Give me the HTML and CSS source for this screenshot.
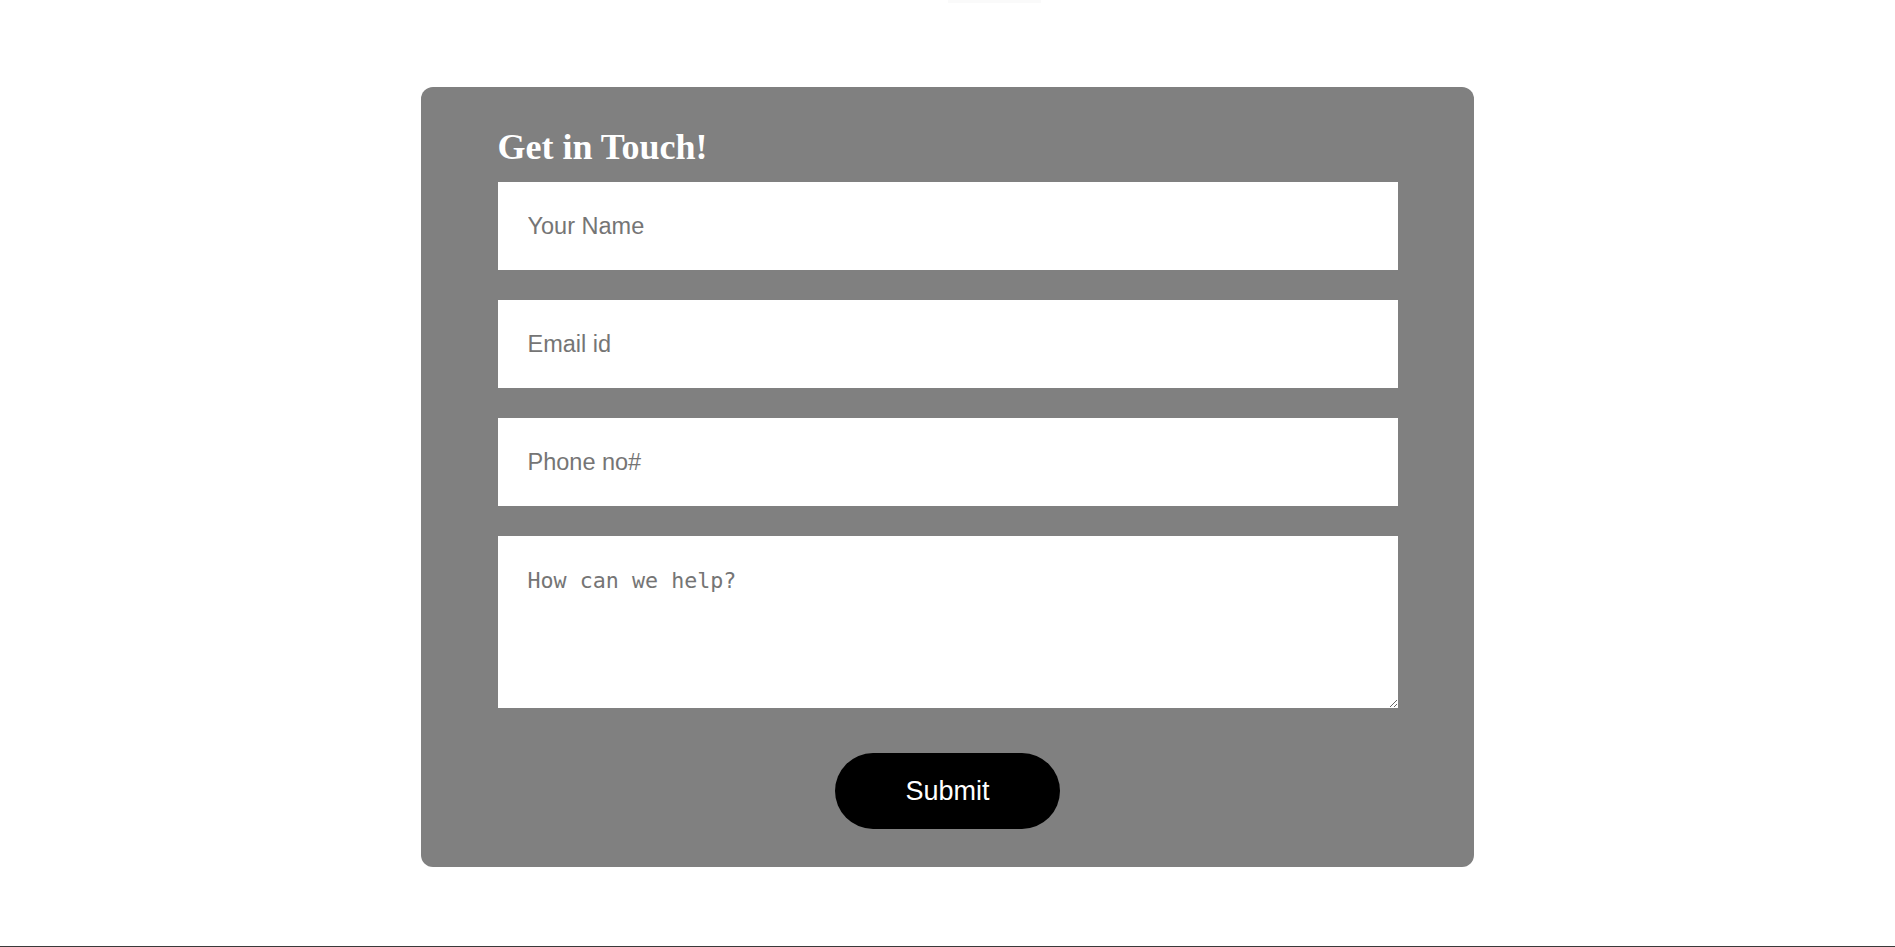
FILE: index.html
```html
<!DOCTYPE html>
<html lang="en">
<head>
<meta charset="utf-8">
<title>Get in Touch</title>
<link rel="stylesheet" href="styles.css">
</head>
<body>
<div class="top-ghost"></div>
<main class="page">
  <section class="card">
    <form class="contact-form">
      <h2 class="title">Get in Touch!</h2>
      <input class="field" type="text" placeholder="Your Name">
      <input class="field" type="email" placeholder="Email id">
      <input class="field" type="tel" placeholder="Phone no#">
      <textarea class="message" placeholder="How can we help?"></textarea>
      <button class="submit" type="button">Submit</button>
    </form>
  </section>
</main>
<footer class="footer"></footer>
</body>
</html>
```
FILE: styles.css
```css
html, body {
  margin: 0;
  padding: 0;
  background: #ffffff;
}

body {
  font-family: "Liberation Sans", Arial, sans-serif;
  position: relative;
  overflow: hidden;
}

.top-ghost {
  position: absolute;
  top: 0;
  left: 948px;
  width: 93px;
  height: 3px;
  background: #fafafa;
}

.page {
  padding-top: 87px;
  padding-bottom: 79px;
}

.card {
  width: 1053px;
  box-sizing: border-box;
  margin: 0 auto;
  background: #808080;
  border-radius: 12px;
  padding: 40px 0 38px;
}

.contact-form {
  width: 900px;
  margin: 0 auto;
  display: flex;
  flex-direction: column;
}

.title {
  margin: 0 0 15px;
  font-family: "Liberation Serif", "Times New Roman", serif;
  font-weight: bold;
  font-size: 36px;
  line-height: 40px;
  color: #ffffff;
}

.field {
  display: block;
  width: 900px;
  height: 88px;
  box-sizing: border-box;
  border: none;
  outline: none;
  margin: 0 0 30px;
  padding: 0 30px;
  font-family: "Liberation Sans", Arial, sans-serif;
  font-size: 23.5px;
  color: #333;
  background: #ffffff;
  border-radius: 0;
}

.field::placeholder {
  color: #757575;
}

.message {
  display: block;
  width: 900px;
  height: 172px;
  box-sizing: border-box;
  border: none;
  outline: none;
  margin: 0;
  padding: 32px 30px 30px;
  font-family: "DejaVu Sans Mono", "Liberation Mono", monospace;
  font-size: 21.7px;
  background: #ffffff;
  border-radius: 0;
}

.message::placeholder {
  color: #757575;
}

.submit {
  display: block;
  align-self: center;
  width: 225px;
  height: 76px;
  margin: 45px 0 0;
  border: none;
  border-radius: 38px;
  background: #000000;
  color: #ffffff;
  font-family: "Liberation Sans", Arial, sans-serif;
  font-size: 27px;
  cursor: pointer;
}

.footer {
  border-top: 1px solid #3a3a3a;
  height: 40px;
}
```
